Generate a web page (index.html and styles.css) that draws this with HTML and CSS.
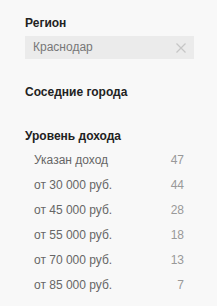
FILE: index.html
```html
<!DOCTYPE html>
<html lang="ru">
<head>
<meta charset="utf-8">
<link rel="stylesheet" href="styles.css">
</head>
<body>
<div class="panel">
  <section class="group">
    <h3 class="title">Регион</h3>
    <div class="field">
      <span class="field-value">Краснодар</span>
      <svg class="clear" width="10" height="10" viewBox="0 0 10 10"><path d="M0.5 0.5L9.5 9.5M9.5 0.5L0.5 9.5" stroke="#c6c6c6" stroke-width="1.2" fill="none"/></svg>
    </div>
  </section>
  <section class="group">
    <h3 class="title title-near">Соседние города</h3>
  </section>
  <section class="group">
    <h3 class="title title-income">Уровень дохода</h3>
    <ul class="list">
      <li class="row"><span class="label">Указан доход</span><span class="count">47</span></li>
      <li class="row"><span class="label">от 30 000 руб.</span><span class="count">44</span></li>
      <li class="row"><span class="label">от 45 000 руб.</span><span class="count">28</span></li>
      <li class="row"><span class="label">от 55 000 руб.</span><span class="count">18</span></li>
      <li class="row"><span class="label">от 70 000 руб.</span><span class="count">13</span></li>
      <li class="row"><span class="label">от 85 000 руб.</span><span class="count">7</span></li>
    </ul>
  </section>
</div>
</body>
</html>
```

FILE: styles.css
```css
html, body {
  margin: 0;
  padding: 0;
  background: #f8f8f8;
}
body {
  font-family: "Liberation Sans", Arial, sans-serif;
  font-size: 12px;
}
.panel {
  padding: 15px 23px 0 25px;
  width: 169px;
}
.title {
  margin: 0;
  font-size: 12px;
  font-weight: bold;
  line-height: 16px;
  color: #222;
}
.field {
  margin-top: 5px;
  height: 23px;
  background: #ebebeb;
  display: flex;
  align-items: center;
  justify-content: space-between;
  padding: 0 8px 0 8px;
}
.field-value {
  color: #777;
  font-size: 12px;
  line-height: 23px;
}
.clear {
  display: block;
}
.title-near {
  margin-top: 25px;
}
.title-income {
  margin-top: 28px;
}
.list {
  list-style: none;
  margin: 4px 0 0 0;
  padding: 0 10px 0 9px;
}
.row {
  display: flex;
  justify-content: space-between;
  line-height: 25px;
  height: 25px;
}
.label {
  color: #666;
}
.count {
  color: #999;
}
```
